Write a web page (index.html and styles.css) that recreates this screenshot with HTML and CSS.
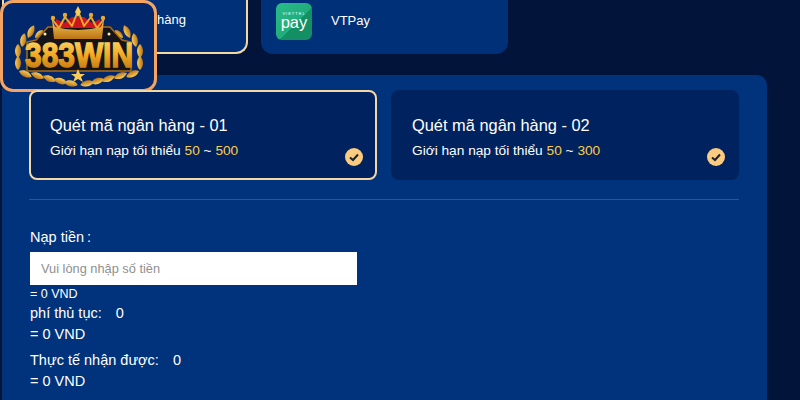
FILE: index.html
```html
<!DOCTYPE html>
<html>
<head>
    <title>383WIN - Nạp tiền</title>
    <link rel="stylesheet" href="styles.css">
</head>
<body>
    <div class="logo">
        <svg width="151" height="86" viewBox="3 3 151 86">
            <defs>
                <linearGradient id="goldText" x1="0" y1="0" x2="0" y2="1">
                    <stop offset="0" stop-color="#ffe27a"/>
                    <stop offset="0.5" stop-color="#f2ac24"/>
                    <stop offset="1" stop-color="#b5690e"/>
                </linearGradient>
                <linearGradient id="goldBody" x1="0" y1="0" x2="0" y2="1">
                    <stop offset="0" stop-color="#f9cd5a"/>
                    <stop offset="1" stop-color="#bb7314"/>
                </linearGradient>
                <path id="leaf" d="M0 0C4 -4 10 -4 14 0C10 4 4 4 0 0Z" fill="url(#goldBody)"/>
            </defs>
            <!-- laurels -->
            <use href="#leaf" transform="translate(28,38) rotate(-65)"/>
            <use href="#leaf" transform="translate(35,38) rotate(-45) scale(.8)"/>
            <use href="#leaf" transform="translate(22,47) rotate(-80)"/>
            <use href="#leaf" transform="translate(18,58) rotate(-90)"/>
            <use href="#leaf" transform="translate(18,70) rotate(-90)"/>
            <use href="#leaf" transform="translate(19,71) rotate(25)"/>
            <use href="#leaf" transform="translate(130,38) rotate(-115)"/>
            <use href="#leaf" transform="translate(123,38) rotate(-135) scale(.8)"/>
            <use href="#leaf" transform="translate(136,47) rotate(-100)"/>
            <use href="#leaf" transform="translate(140,58) rotate(-90)"/>
            <use href="#leaf" transform="translate(140,70) rotate(-90)"/>
            <use href="#leaf" transform="translate(139,71) rotate(155)"/>
            <use href="#leaf" transform="translate(31,73) rotate(22)"/>
            <use href="#leaf" transform="translate(43,76) rotate(22)"/>
            <use href="#leaf" transform="translate(54,79) rotate(18)"/>
            <use href="#leaf" transform="translate(64,82) rotate(12)"/>
            <use href="#leaf" transform="translate(127,73) rotate(158)"/>
            <use href="#leaf" transform="translate(115,76) rotate(158)"/>
            <use href="#leaf" transform="translate(104,79) rotate(162)"/>
            <use href="#leaf" transform="translate(94,82) rotate(168)"/>
            <!-- dark plate -->
            <path d="M36 40L48 27H110L122 40L131 42V71H27V42Z" fill="#14141a" stroke="#a86c14" stroke-width="1.500"/>
            <circle cx="45" cy="34" r="1.500" fill="#ffe9a8"/>
            <circle cx="109" cy="34" r="1.500" fill="#ffe9a8"/>
            <!-- crown -->
            <path d="M56 19L64 23L72 17H84L92 23L100 19L102 28H54Z" fill="#cc151c"/>
            <path d="M52 19L59 28L65 17L72 26L78 11L84 26L91 17L97 28L104 19" fill="none" stroke="#eba92b" stroke-width="2" stroke-linejoin="round"/>
            <path d="M52 19L55 27Q78 33 101 27L104 19L102 39H54Z" fill="url(#goldBody)"/>
            <path d="M78 6L81 12L78 17L75 12Z" fill="#f9cd5a"/>
            <circle cx="65" cy="15" r="2.200" fill="#eba92b"/>
            <circle cx="91" cy="15" r="2.200" fill="#eba92b"/>
            <circle cx="53" cy="18" r="2.200" fill="#eba92b"/>
            <circle cx="103" cy="18" r="2.200" fill="#eba92b"/>
            <path d="M78 20L80.500 23.500L78 27L75.500 23.500Z" fill="#cc151c"/>
            <!-- name -->
            <text class="logo-text" x="79" y="67" text-anchor="middle" textLength="108" lengthAdjust="spacingAndGlyphs">383WIN</text>
            <path d="M78 69L80 74H85L81 77L83 82L78 79L73 82L75 77L71 74H76Z" fill="#f9cd5a"/>
        </svg>
    </div>

    <div class="page">
        <div class="methods">
            <div class="method method-active">
                <span class="method-name">Quét mã ngân hàng</span>
            </div>
            <div class="method">
                <div class="vt-icon">
                    <span class="vt-brand">VIETTEL</span>
                    <span class="vt-pay">pay</span>
                </div>
                <span class="method-name">VTPay</span>
            </div>
        </div>

        <div class="panel">
            <div class="banks">
                <div class="bank bank-active">
                    <div class="bank-title">Quét mã ngân hàng - 01</div>
                    <div class="bank-limit">Giới hạn nạp tối thiểu <span class="gold">50</span> ~ <span class="gold">500</span></div>
                    <svg class="check" viewBox="0 0 18 18"><circle cx="9" cy="9" r="9" fill="#fbcb7f"/><path d="M5 9.500L8 12L13 6.500" fill="none" stroke="#1a2238" stroke-width="2"/></svg>
                </div>
                <div class="bank">
                    <div class="bank-title">Quét mã ngân hàng - 02</div>
                    <div class="bank-limit">Giới hạn nạp tối thiểu <span class="gold">50</span> ~ <span class="gold">300</span></div>
                    <svg class="check" viewBox="0 0 18 18"><circle cx="9" cy="9" r="9" fill="#fbcb7f"/><path d="M5 9.500L8 12L13 6.500" fill="none" stroke="#1a2238" stroke-width="2"/></svg>
                </div>
            </div>

            <div class="form">
                <label class="form-label">Nạp tiền<span class="colon">:</span></label>
                <input class="amount" type="text" placeholder="Vui lòng nhập số tiền">
                <div class="rate">= 0 VND</div>
                <div class="row row-first">phí thủ tục:<span class="val">0</span></div>
                <div class="row">= 0 VND</div>
                <div class="row row-gap">Thực tế nhận được:<span class="val">0</span></div>
                <div class="row">= 0 VND</div>
            </div>
        </div>
    </div>
</body>
</html>
```

FILE: styles.css
```css
* {
    box-sizing: border-box;
}
html, body {
    height: 400px;
    overflow: hidden;
}
body {
    margin: 0;
    background-color: #03143a;
    font-family: "Liberation Sans", Arial, sans-serif;
    color: #fff;
}
.logo {
    position: absolute;
    left: 0;
    top: 0;
    width: 157px;
    height: 92px;
    background-color: #03276b;
    border: 3px solid #f5a561;
    border-radius: 13px;
    overflow: hidden;
}
.logo-text {
    font-family: "Liberation Sans", Arial, sans-serif;
    font-weight: bold;
    font-size: 35px;
    fill: url(#goldText);
    stroke: url(#goldText);
    stroke-width: 1.4px;
}
.page {
    width: 767px;
    margin-top: -40px;
    padding-left: 2px;
}
.methods {
    display: flex;
    gap: 13px;
    height: 94px;
    margin-bottom: 21px;
}
.method {
    width: 247px;
    display: flex;
    align-items: flex-end;
    gap: 19px;
    padding: 0 0 14px 15px;
    background-color: #003078;
    border-radius: 0 0 12px 12px;
}
.method-active {
    width: 246px;
    padding-left: 67px;
    padding-bottom: 25px;
    border: 2px solid #f5d7a0;
    border-top: 0;
}
.method-name {
    font-size: 13px;
    line-height: 15px;
    margin-bottom: 12px;
}
.method-active .method-name {
    margin-bottom: 0;
}
.vt-icon {
    width: 36px;
    height: 37px;
    display: flex;
    flex-direction: column;
    align-items: center;
    padding-top: 9px;
    border-radius: 6px;
    background: linear-gradient(135deg, #2abb88 0%, #20ad7b 55%, #128f63 56%, #168f66 100%);
}
.vt-brand {
    font-size: 4px;
    line-height: 4px;
    letter-spacing: 1px;
}
.vt-pay {
    font-size: 16.5px;
    line-height: 13px;
}
.panel {
    height: 325px;
    padding: 15px 28px 0 27px;
    background-color: #00337b;
    border-radius: 10px 10px 0 0;
}
.banks {
    display: grid;
    grid-template-columns: 348px 348px;
    gap: 14px;
    padding-bottom: 19px;
    border-bottom: 1px solid #2a5496;
}
.bank {
    position: relative;
    height: 90px;
    padding: 25px 21px 0;
    background-color: #00235f;
    border-radius: 8px;
}
.bank-active {
    padding: 23px 19px 0;
    border: 2px solid #f5d7a0;
}
.bank-title {
    font-size: 16.4px;
    line-height: 20px;
}
.bank-limit {
    margin-top: 8px;
    font-size: 13.7px;
    line-height: 15px;
}
.gold {
    color: #f8cd48;
}
.check {
    position: absolute;
    right: 14px;
    bottom: 14px;
    width: 18px;
    height: 18px;
}
.bank-active .check {
    right: 12px;
    bottom: 12px;
}
.form {
    padding: 29px 0 0 1px;
    font-size: 14.5px;
}
.form-label {
    display: block;
    line-height: 16px;
}
.colon {
    margin-left: 3px;
}
.amount {
    display: block;
    width: 327px;
    height: 33px;
    margin-top: 7px;
    padding: 0 11px;
    border: 0;
    background-color: #fff;
    font-family: "Liberation Sans", Arial, sans-serif;
    font-size: 12.8px;
}
.amount::placeholder {
    color: #8f8f8f;
}
.rate {
    margin-top: 2px;
    font-size: 12.5px;
    line-height: 15px;
}
.row {
    margin-top: 4px;
    line-height: 17px;
}
.row-first {
    margin-top: 3px;
}
.row-gap {
    margin-top: 9px;
}
.val {
    margin-left: 14px;
}
```
